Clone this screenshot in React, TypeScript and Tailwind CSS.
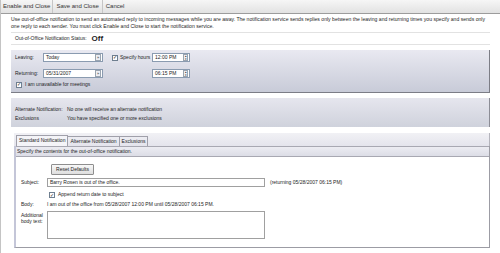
import React from "react";

function DateBox({ value, w }: { value: string; w: string }) {
    return (
        <div className={`flex items-center h-[9px] ${w} bg-white border border-[#8a9bb0]`}>
            <span className="flex-1 pl-[2px] leading-none">{value}</span>
            <span className="w-[6px] h-[7px] mr-[1px] border border-[#9aa4b0] bg-[#eef0f4] text-[4px] leading-[5px] text-center">
                »
            </span>
        </div>
    );
}

function TimeBox({ value }: { value: string }) {
    return (
        <div className="flex items-center h-[9px] w-[38px] bg-white border border-[#8a9bb0]">
            <span className="flex-1 pl-[2px] leading-none">{value}</span>
            <span className="w-[5px] h-[7px] mr-[1px] border border-[#9aa4b0] bg-[#eef0f4] flex flex-col items-center justify-center text-[3px] leading-[3px]">
                <span>▴</span>
                <span>▾</span>
            </span>
        </div>
    );
}

function Check() {
    return (
        <span className="inline-flex items-center justify-center w-[6px] h-[6px] border border-[#6f7f90] bg-white text-[5px] leading-none text-[#222]">
            ✓
        </span>
    );
}

export default function App() {
    return (
        <div
            className="w-[500px] h-[253px] bg-white overflow-hidden text-[#1e1e1e] text-[5px] border-l border-[#c4c4c4]"
            style={{ fontFamily: '"Liberation Sans", Arial, sans-serif' }}
        >
            {/* toolbar */}
            <div className="h-[14px] flex items-center bg-gradient-to-b from-[#f6f6f6] to-[#e2e2e2] border-b border-[#9c9c9c] text-[6px] text-[#333]">
                <div className="px-[2px] h-full flex items-center border-r border-[#c6c6c6]">Enable and Close</div>
                <div className="px-[3px] h-full flex items-center border-r border-[#c6c6c6]">Save and Close</div>
                <div className="px-[3px] h-full flex items-center">Cancel</div>
            </div>

            <div className="pl-[10px] pr-[10px]">
                {/* description */}
                <div className="mt-[2px] leading-[7px] whitespace-nowrap text-[5.1px]">
                    Use out-of-office notification to send an automated reply to incoming messages while you are away. The
                    notification service sends replies only between the leaving and returning times you specify and sends only
                    <br />
                    one reply to each sender. You must click Enable and Close to start the notification service.
                </div>
                <div className="mt-[2px] border-t border-[#e2e2e2]" />
                <div className="h-[11px] flex items-center pl-[4px] gap-[5px]">
                    <span>Out-of-Office Notification Status:</span>
                    <span className="text-[8px] font-bold">Off</span>
                </div>
                <div className="border-t border-[#e2e2e2]" />

                {/* leaving / returning panel */}
                <div className="mt-[5px] h-[43px] bg-gradient-to-b from-[#e9e9f1] to-[#c8cbd8] border-r border-b border-[#7c7d86] pt-[3px] pl-[4px]">
                    <div className="flex items-center h-[9px]">
                        <span className="w-[28px]">Leaving:</span>
                        <DateBox value="Today" w="w-[60px]" />
                        <span className="ml-[9px] flex items-center gap-[2px] w-[40px]">
                            <Check />
                            Specify hours
                        </span>
                        <TimeBox value="12:00 PM" />
                    </div>
                    <div className="flex items-center h-[9px] mt-[7px]">
                        <span className="w-[28px]">Returning:</span>
                        <DateBox value="05/31/2007" w="w-[60px]" />
                        <span className="ml-[9px] w-[40px]" />
                        <TimeBox value="06:15 PM" />
                    </div>
                    <div className="flex items-center gap-[3px] mt-[3px] pl-[1px]">
                        <Check />
                        I am unavailable for meetings
                    </div>
                </div>

                {/* alternate panel */}
                <div className="mt-[5px] h-[29px] bg-gradient-to-b from-[#e6e6ee] to-[#cfd2dc] border-r border-[#8c8d96] pl-[4px] pt-[7px] leading-[9px]">
                    <div className="flex">
                        <span className="w-[52px]">Alternate Notification:</span>
                        <span>No one will receive an alternate notification</span>
                    </div>
                    <div className="flex">
                        <span className="w-[52px]">Exclusions</span>
                        <span>You have specified one or more exclusions</span>
                    </div>
                </div>

                {/* tabs */}
                <div className="mt-[6px] ml-[3px] h-[13px] flex items-end pl-[2px] bg-gradient-to-b from-[#f1f1f5] to-[#e4e4ec] border-r border-[#b4b4bc]">
                    <div className="h-[11px] px-[2px] flex items-center bg-[#f4f4f8] border border-b-0 border-[#a0a0aa]">Standard Notification</div>
                    <div className="h-[10px] px-[2px] flex items-center border-r border-t border-[#a0a0aa]">Alternate Notification</div>
                    <div className="h-[10px] px-[2px] flex items-center border-r border-t border-[#a0a0aa]">Exclusions</div>
                </div>
                <div className="ml-[3px] h-[102px] border-l-2 border-l-[#c4c6d8] border-r border-b border-[#9c9ca4] flex flex-col">
                    <div className="h-[11px] flex items-center pl-[1px] bg-gradient-to-b from-[#ececf2] to-[#dcdde6] border-t border-b border-[#a8a8b2]">
                        Specify the contents for the out-of-office notification.
                    </div>
                    <div className="flex-1 bg-white">
                        <div className="ml-[35px] mt-[7px] w-[43px] h-[11px] flex items-center justify-center bg-gradient-to-b from-[#f8f8f8] to-[#dedede] border border-[#8e8e8e] rounded-[1px]">
                            Reset Defaults
                        </div>
                        <div className="flex items-center mt-[3px] h-[9px]">
                            <span className="w-[31px] pl-[5px]">Subject:</span>
                            <div className="w-[218px] h-[9px] border border-[#a0a0a0] bg-white flex items-center pl-[2px]">
                                Barry Rosen is out of the office.
                            </div>
                            <span className="ml-[5px]">(returning 05/28/2007 06:15 PM)</span>
                        </div>
                        <div className="flex items-center gap-[3px] ml-[33px] mt-[4px] h-[8px]">
                            <Check />
                            Append return date to subject
                        </div>
                        <div className="flex items-center mt-[1px] h-[9px]">
                            <span className="w-[31px] pl-[5px]">Body:</span>
                            <span>I am out of the office from 05/28/2007 12:00 PM until 05/28/2007 06:15 PM.</span>
                        </div>
                        <div className="flex mt-[2px]">
                            <span className="w-[31px] pl-[5px] leading-[6px] pt-[1px]">
                                Additional
                                <br />
                                body text:
                            </span>
                            <div className="w-[218px] h-[28px] border border-[#a0a0a0] bg-white" />
                        </div>
                    </div>
                </div>
            </div>
        </div>
    );
}
